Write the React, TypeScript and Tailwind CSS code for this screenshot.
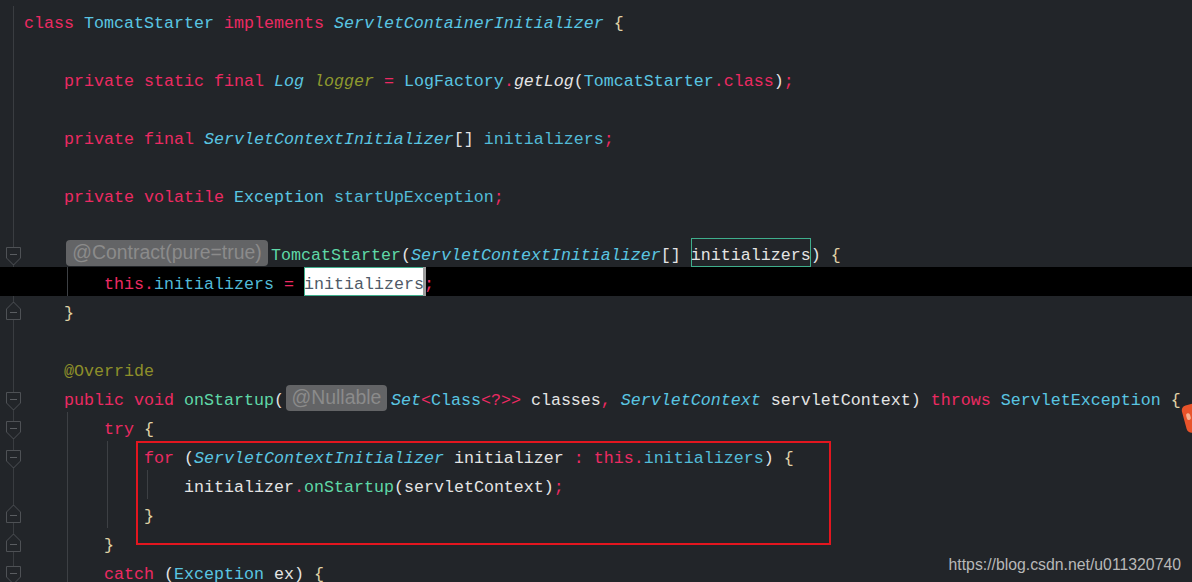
import React from "react";

const K = ({ children }: { children: React.ReactNode }) => <span className="text-[#ec2a62]">{children}</span>;
const C = ({ children }: { children: React.ReactNode }) => <span className="text-[#5ac6e2]">{children}</span>;
const CI = ({ children }: { children: React.ReactNode }) => <span className="text-[#5ac6e2] italic">{children}</span>;
const F = ({ children }: { children: React.ReactNode }) => <span className="text-[#52bbd8]">{children}</span>;
const M = ({ children }: { children: React.ReactNode }) => <span className="text-[#5fd8a7]">{children}</span>;
const P = ({ children }: { children: React.ReactNode }) => <span className="text-[#e4e4e4]">{children}</span>;
const B = ({ children }: { children: React.ReactNode }) => <span className="text-[#e0d3a6]">{children}</span>;
const A = ({ children }: { children: React.ReactNode }) => <span className="text-[#8e8f2a]">{children}</span>;
const SF = ({ children }: { children: React.ReactNode }) => <span className="text-[#8f9a2e] italic">{children}</span>;

const Indent = ({ guide }: { guide?: boolean }) => (
  <span className="flex w-[40px] h-full shrink-0">
    {guide ? <span className="ml-[3px] w-px h-full bg-[#3d4044]" /> : null}
  </span>
);

const FoldDown = () => (
  <svg className="absolute left-[5px] top-[9px]" width="17" height="19" viewBox="0 0 17 19">
    <path d="M1.5 0.5 H15.5 V11 L8.5 18 L1.5 11 Z" fill="#222529" stroke="#4e5155" strokeWidth="1" />
    <path d="M5 7.5 H12" stroke="#5a5d61" strokeWidth="1" />
  </svg>
);

const FoldUp = () => (
  <svg className="absolute left-[5px] top-[5px]" width="17" height="19" viewBox="0 0 17 19">
    <path d="M1.5 18.5 H15.5 V8 L8.5 1 L1.5 8 Z" fill="#222529" stroke="#4e5155" strokeWidth="1" />
    <path d="M5 11.5 H12" stroke="#5a5d61" strokeWidth="1" />
  </svg>
);

type RowProps = {
  fold?: "down" | "up";
  active?: boolean;
  children?: React.ReactNode;
};

const Row = ({ fold, active, children }: RowProps) => (
  <div className={active ? "flex h-[29px] items-stretch bg-black" : "flex h-[29px] items-stretch"}>
    <div className="relative w-[24px] h-full shrink-0">
      {active ? null : <div className="ml-[13px] w-px h-full bg-[#3a3d41]" />}
      {fold === "down" ? <FoldDown /> : null}
      {fold === "up" ? <FoldUp /> : null}
    </div>
    {children}
  </div>
);

const Txt = ({ children }: { children: React.ReactNode }) => (
  <span className="relative top-[3px] leading-[29px] whitespace-pre">{children}</span>
);

const Pill = ({ text, w, mr }: { text: string; w: string; mr: string }) => (
  <span
    className={`self-center flex items-center justify-center h-[26px] ml-[2px] rounded-[4px] bg-[#636466] text-[#8b8b8b] font-['Liberation_Sans',Arial,sans-serif] text-[19.4px] ${w} ${mr}`}
  >
    {text}
  </span>
);

export default function App() {
  return (
    <div className="relative w-[1192px] h-[582px] overflow-hidden bg-[#222529] font-['Liberation_Mono',monospace] text-[16.67px]">
      <div className="flex flex-col pt-[6px]">
        <Row>
          <Txt>
            <K>class</K> <C>TomcatStarter</C> <K>implements</K> <CI>ServletContainerInitializer</CI> <B>{"{"}</B>
          </Txt>
        </Row>
        <Row />
        <Row>
          <Indent />
          <Txt>
            <K>private static final</K> <CI>Log</CI> <SF>logger</SF> <K>=</K> <C>LogFactory</C>
            <K>.</K>
            <span className="text-[#e6e6e6] italic">getLog</span>
            <P>(</P>
            <C>TomcatStarter</C>
            <K>.class</K>
            <P>)</P>
            <K>;</K>
          </Txt>
        </Row>
        <Row />
        <Row>
          <Indent />
          <Txt>
            <K>private final</K> <CI>ServletContextInitializer</CI>
            <P>[]</P> <F>initializers</F>
            <K>;</K>
          </Txt>
        </Row>
        <Row />
        <Row>
          <Indent />
          <Txt>
            <K>private volatile</K> <C>Exception</C> <F>startUpException</F>
            <K>;</K>
          </Txt>
        </Row>
        <Row />
        <Row fold="down">
          <Indent />
          <Pill text="@Contract(pure=true)" w="w-[202px]" mr="mr-[3px]" />
          <Txt>
            <M>TomcatStarter</M>
            <P>(</P>
            <CI>ServletContextInitializer</CI>
            <P>[]</P>{" "}
            <span className="relative -top-[3px] inline-block shadow-[inset_0_0_0_1px_#3fae8c] text-[#e4e4e4]">
              <span className="relative top-[3px]">initializers</span>
            </span>
            <P>)</P> <B>{"{"}</B>
          </Txt>
        </Row>
        <Row active>
          <Indent />
          <Indent guide />
          <Txt>
            <K>this.</K>
            <F>initializers</F> <K>=</K>{" "}
            <span className="relative -top-[3px] inline-block bg-white shadow-[inset_0_0_0_1px_#3fae8c] text-[#4f5a68]">
              <span className="relative top-[3px]">initializers</span>
              <span className="absolute right-[-2px] top-0 bottom-0 w-[3px] bg-[#9c9c9c]" />
            </span>
            <K>;</K>
          </Txt>
        </Row>
        <Row fold="up">
          <Indent />
          <Txt>
            <B>{"}"}</B>
          </Txt>
        </Row>
        <Row />
        <Row>
          <Indent />
          <Txt>
            <A>@Override</A>
          </Txt>
        </Row>
        <Row fold="down">
          <Indent />
          <Txt>
            <K>public void</K> <M>onStartup</M>
            <P>(</P>
          </Txt>
          <Pill text="@Nullable" w="w-[101px]" mr="mr-[4px]" />
          <Txt>
            <CI>Set</CI>
            <K>&lt;</K>
            <C>Class</C>
            <K>&lt;?&gt;&gt;</K> <P>classes</P>
            <K>,</K> <CI>ServletContext</CI> <P>servletContext)</P> <K>throws</K> <C>ServletException</C>{" "}
            <B>{"{"}</B>
          </Txt>
        </Row>
        <Row fold="down">
          <Indent />
          <Indent guide />
          <Txt>
            <K>try</K> <B>{"{"}</B>
          </Txt>
        </Row>
        <Row fold="down">
          <Indent />
          <Indent guide />
          <Indent guide />
          <Txt>
            <K>for</K> <P>(</P>
            <CI>ServletContextInitializer</CI> <P>initializer</P> <K>:</K> <K>this.</K>
            <F>initializers</F>
            <P>)</P> <B>{"{"}</B>
          </Txt>
        </Row>
        <Row>
          <Indent />
          <Indent guide />
          <Indent guide />
          <Indent guide />
          <Txt>
            <P>initializer</P>
            <K>.</K>
            <M>onStartup</M>
            <P>(servletContext)</P>
            <K>;</K>
          </Txt>
        </Row>
        <Row fold="up">
          <Indent />
          <Indent guide />
          <Indent guide />
          <Txt>
            <B>{"}"}</B>
          </Txt>
        </Row>
        <Row fold="up">
          <Indent />
          <Indent guide />
          <Txt>
            <B>{"}"}</B>
          </Txt>
        </Row>
        <Row fold="down">
          <Indent />
          <Indent guide />
          <Txt>
            <K>catch</K> <P>(</P>
            <C>Exception</C> <P>ex)</P> <B>{"{"}</B>
          </Txt>
        </Row>
      </div>

      <div className="absolute left-[136px] top-[441px] w-[695px] h-[104px] border-2 border-[#e3161f]" />

      <div className="absolute left-[1184px] top-[404px] w-[18px] h-[28px] rounded-[5px] bg-[#e8532a] rotate-[-15deg]">
        <div className="ml-[3px] mt-[8px] w-[4px] h-[7px] rounded-full bg-[#f6b08e]" />
      </div>

      <div className="absolute right-[11px] top-[553px] font-['Liberation_Sans',Arial,sans-serif] text-[15.8px] text-[#b8b8b8]">
        https://blog.csdn.net/u011320740
      </div>
    </div>
  );
}
